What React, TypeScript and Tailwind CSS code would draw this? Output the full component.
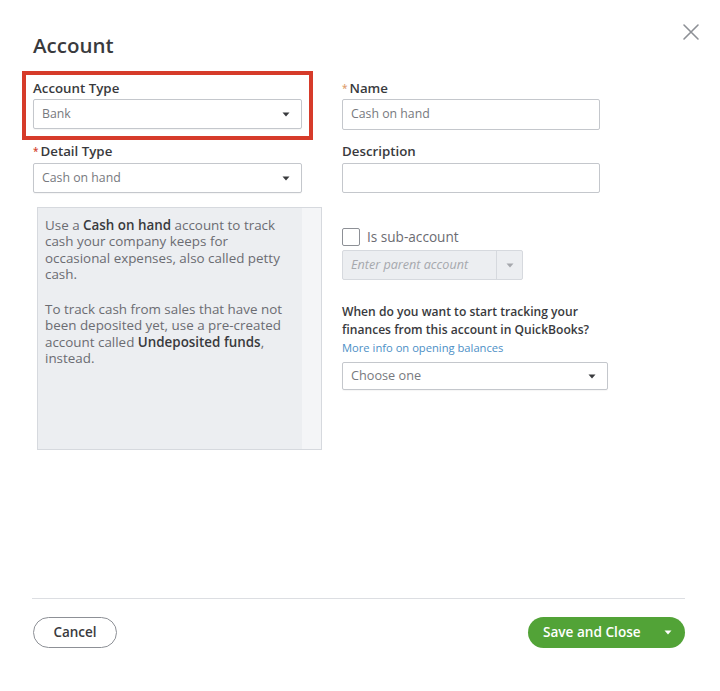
import React from "react";

const Caret = ({ className = "" }: { className?: string }) => (
  <svg width="8" height="5" viewBox="0 0 8 5" className={className}>
    <path d="M0.5 0.5 L7.5 0.5 L4 4.5 Z" fill="currentColor" />
  </svg>
);

const Select = ({ value, w, h = "h-[30px]", size = "text-[12.3px]" }: { value: string; w: string; h?: string; size?: string }) => (
  <div className={`${w} ${h} flex items-center justify-between border border-[#c4c7cc] rounded-[2px] bg-white pl-[8px] pr-[11px] shadow-[0_1px_1px_rgba(0,0,0,0.04)]`}>
    <span className={`${size} text-[#77797e]`}>{value}</span>
    <Caret className="text-[#393a3d]" />
  </div>
);

export default function App() {
  return (
    <div
      className="w-[720px] h-[691px] bg-white flex flex-col pt-[20px] pr-[20px] pl-[33px] relative overflow-hidden"
      style={{ fontFamily: "'Open Sans', 'Noto Sans', 'Liberation Sans', sans-serif" }}
    >
      {/* header */}
      <div className="flex justify-between items-start h-[58px]">
        <h1 className="mt-[11px] leading-[28px] text-[20.5px] font-semibold text-[#393a3d]">Account</h1>
        <svg width="18" height="18" viewBox="0 0 18 18" className="mt-[3px] text-[#8d9096]">
          <path d="M2 2 L16 16 M16 2 L2 16" stroke="currentColor" strokeWidth="1.6" strokeLinecap="round" />
        </svg>
      </div>

      {/* body */}
      <div className="flex gap-[20px]">
        {/* left column */}
        <div className="w-[289px] flex flex-col">
          <div className="relative flex flex-col">
            <div className="absolute left-[-11px] top-[-7px] w-[291px] h-[69px] border-[4px] border-[#d63b2a] pointer-events-none" />
            <label className="h-[20px] leading-[20px] text-[13.3px] font-semibold text-[#393a3d]">Account Type</label>
            <div className="mt-[1px]">
              <Select value="Bank" w="w-[269px]" />
            </div>
          </div>
          <label className="mt-[12px] h-[20px] leading-[20px] text-[13.3px] font-semibold text-[#393a3d]">
            <span className="text-[#d4462f] text-[10px] align-top mr-[2px]">*</span>Detail Type
          </label>
          <div className="mt-[2px]">
            <Select value="Cash on hand" w="w-[269px]" />
          </div>
          <div className="mt-[14px] ml-[4px] w-[285px] h-[243px] border border-[#d6d9de] bg-[#eceef1] flex">
            <div className="flex-1 pl-[7px] pt-[9px] text-[13.4px] leading-[16.3px] text-[#6b6c72] whitespace-nowrap">
              <span className="block">
                Use a <b className="font-semibold text-[#393a3d]">Cash on hand</b> account to track
              </span>
              <span className="block">cash your company keeps for</span>
              <span className="block">occasional expenses, also called petty</span>
              <span className="block">cash.</span>
              <span className="block mt-[19px]">To track cash from sales that have not</span>
              <span className="block">been deposited yet, use a pre-created</span>
              <span className="block">
                account called <b className="font-semibold text-[#393a3d]">Undeposited funds</b>,
              </span>
              <span className="block">instead.</span>
            </div>
            <div className="w-[19px] shrink-0 bg-[#f4f5f7]" />
          </div>
        </div>

        {/* right column */}
        <div className="flex flex-col">
          <label className="h-[20px] leading-[20px] text-[13.3px] font-semibold text-[#393a3d]">
            <span className="text-[#e0a070] text-[10px] align-top mr-[2px]">*</span>Name
          </label>
          <div className="mt-[1px] w-[258px] h-[31px] border border-[#c4c7cc] rounded-[2px] flex items-center pl-[8px]">
            <span className="text-[12.3px] text-[#77797e]">Cash on hand</span>
          </div>
          <label className="mt-[11px] h-[20px] leading-[20px] text-[13.3px] font-semibold text-[#393a3d]">Description</label>
          <div className="mt-[2px] w-[258px] h-[30px] border border-[#c4c7cc] rounded-[2px]" />

          <div className="mt-[35px] flex items-center gap-[7px] h-[18px]">
            <div className="w-[18px] h-[18px] border border-[#8d9096] rounded-[2px] bg-white" />
            <span className="text-[13.6px] text-[#6b6c72]">Is sub-account</span>
          </div>
          <div className="mt-[4px] w-[181px] h-[30px] border border-[#d6d9de] rounded-[2px] bg-[#eceef1] flex items-center">
            <span className="flex-1 pl-[8px] text-[12.6px] italic text-[#a6a8ad] whitespace-nowrap">Enter parent account</span>
            <div className="w-[26px] shrink-0 h-full border-l border-[#d6d9de] flex items-center justify-center">
              <Caret className="text-[#a6a8ad]" />
            </div>
          </div>

          <p className="mt-[23px] w-[270px] text-[12.1px] leading-[18px] font-semibold text-[#393a3d]">
            When do you want to start tracking your
            <br />
            finances from this account in QuickBooks?
          </p>
          <a className="leading-[18px] text-[11.2px] text-[#4d8fc6]">More info on opening balances</a>
          <div className="mt-[5px]">
            <Select value="Choose one" w="w-[266px]" h="h-[28px]" size="text-[12.7px]" />
          </div>
        </div>
      </div>

      {/* footer */}
      <div className="mt-auto mr-[15px] -ml-[1px] border-t border-[#dcdee2] pt-[18px] pb-[43px] flex justify-between items-center">
        <button className="ml-[1px] w-[84px] h-[31px] rounded-full border-[1.5px] border-[#8d9096] bg-white text-[13.5px] font-semibold text-[#393a3d]">
          Cancel
        </button>
        <button className="w-[157px] h-[31px] rounded-full bg-[#52a337] flex items-center pl-[15px] pr-[13px] text-white">
          <span className="text-[13.6px] font-semibold flex-1 text-left whitespace-nowrap">Save and Close</span>
          <Caret className="text-white" />
        </button>
      </div>
    </div>
  );
}
